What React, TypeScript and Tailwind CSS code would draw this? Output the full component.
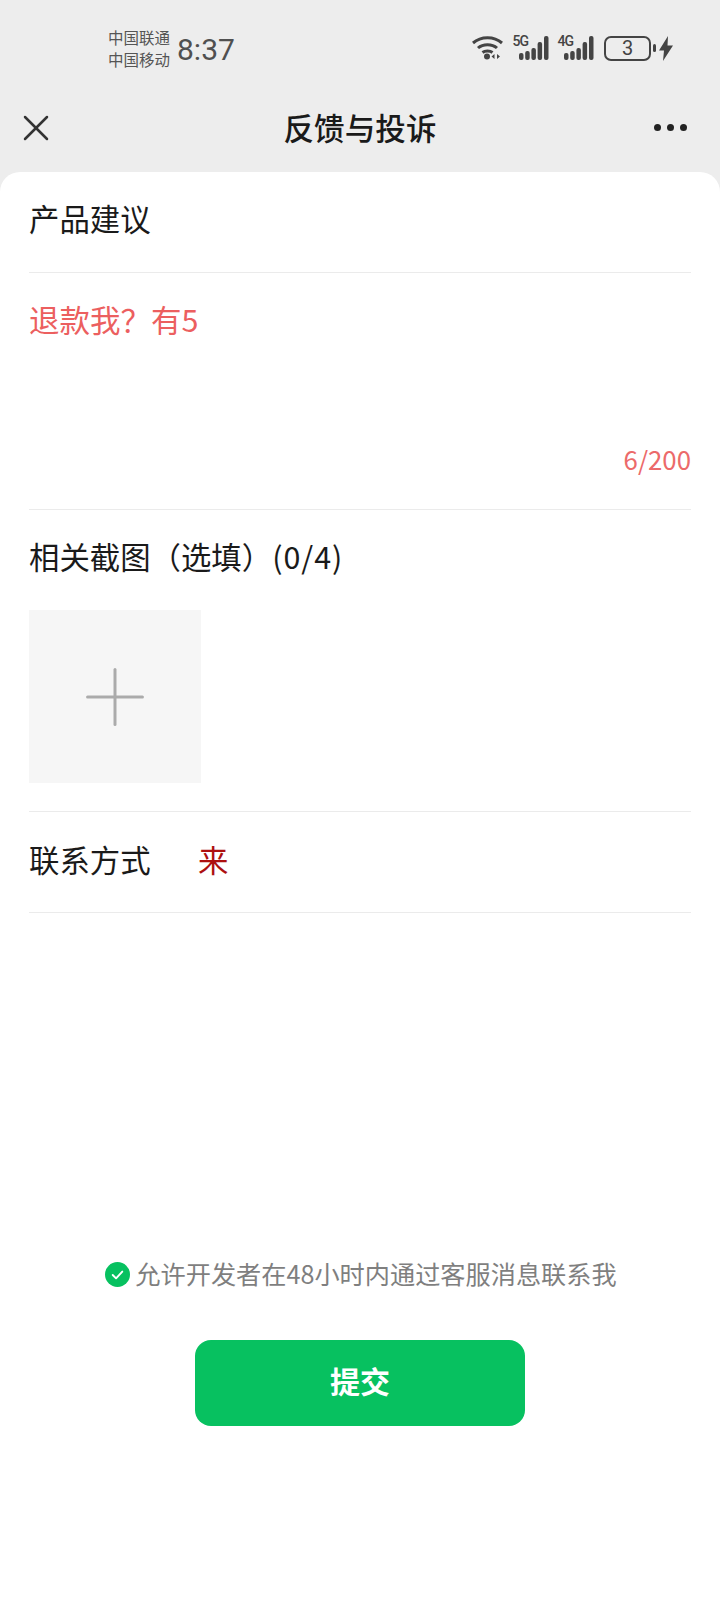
import React from 'react'
import { Plus, X } from 'lucide-react'

const font = "font-['Noto_Sans_CJK_SC','Noto_Sans',sans-serif]"

// Status bar glyphs, drawn because the packages have no dual-SIM signal icons
const SignalIcon: React.FC<{ label: string }> = ({ label }) => (
  <div className="relative w-[35px] h-[24px]">
    <span className="absolute left-[-1.500px] top-[-2px] text-[14px] leading-[14px] font-medium tracking-[-1px] text-[#444] font-['Roboto',sans-serif]">
      {label}
    </span>
    <svg width="35" height="24" viewBox="0 0 35 24" className="absolute left-0 top-0" fill="#444">
      <rect x="5" y="17" width="4.5" height="7" rx="2" />
      <rect x="11.2" y="15" width="4.5" height="9" rx="2" />
      <rect x="17.4" y="12" width="4.5" height="12" rx="2" />
      <rect x="23.6" y="6" width="4.5" height="18" rx="2" />
      <rect x="30" y="0" width="4.5" height="24" rx="2" />
    </svg>
  </div>
)

const WifiIcon: React.FC = () => (
  <svg width="31" height="24" viewBox="0 0 31 24" fill="none" stroke="#444" strokeWidth="3">
    <path d="M1 7C9 0 22 0 30 7" />
    <path d="M6 12C11 7.5 20 7.5 25 12" />
    <path d="M10.5 16.5C13 14.5 18 14.5 20.5 16.5" />
    <circle cx="15" cy="20.5" r="3" fill="#444" stroke="none" />
    <path d="M22.5 18l-3 2.5 3 2.5zM25 18l3 2.5-3 2.5z" fill="#444" stroke="none" />
  </svg>
)

const StatusBar: React.FC = () => (
  <div className="h-[88px] flex items-start justify-between pl-[108px] pr-[47px] pt-[27px]">
    <div className="flex items-center gap-[5px]">
      <div className="flex flex-col text-[15.5px] leading-[22px] text-[#555] w-[64px] -mt-[3px]">
        <span>中国联通</span>
        <span>中国移动</span>
      </div>
      <span className="text-[30px] leading-[44px] text-[#505050] font-['Roboto',sans-serif] mt-[1px]">8:37</span>
    </div>
    <div className="flex items-center h-[44px] mt-[-1px]">
      <WifiIcon />
      <div className="ml-[11px]">
        <SignalIcon label="5G" />
      </div>
      <div className="ml-[10px]">
        <SignalIcon label="4G" />
      </div>
      <div className="w-[47px] h-[25px] ml-[10px] rounded-[7px] border-2 border-[#444] flex items-center justify-center text-[20px] leading-none text-[#444] font-['Roboto',sans-serif]">
        3
      </div>
      <div className="w-[3px] h-[8px] ml-[2px] bg-[#444] rounded-full" />
      <svg width="14" height="25" viewBox="0 0 14 25" fill="#444" className="ml-[3px]">
        <path d="M9 0 0 14.500h5l-1 10.500 10-15.500H8.500z" />
      </svg>
    </div>
  </div>
)

const NavBar: React.FC = () => (
  <div className="h-[84px] px-[14px] pb-[5px] flex items-center justify-between">
    <div className="flex-1">
      <X size={44} strokeWidth={2.500} absoluteStrokeWidth className="text-[#333]" />
    </div>
    <h1 className="text-[30.600px] font-medium leading-none text-[#1a1a1a]">反馈与投诉</h1>
    <div className="flex-1 flex justify-end">
      <div className="flex items-center gap-[6px] mr-[19px]">
        <span className="w-[7px] h-[7px] rounded-full bg-[#222]" />
        <span className="w-[7px] h-[7px] rounded-full bg-[#222]" />
        <span className="w-[7px] h-[7px] rounded-full bg-[#222]" />
      </div>
    </div>
  </div>
)

const App: React.FC = () => (
  <div className={`w-[720px] h-[1600px] bg-[#ededed] overflow-hidden ${font}`}>
    <StatusBar />
    <NavBar />

    <main className="h-[1428px] bg-white rounded-t-[20px] px-[29px]">
      <div className="h-[101px] border-b border-[#ebebeb] flex items-center pb-[6px] text-[30.400px] text-[#1a1a1a]">
        产品建议
      </div>

      <div className="h-[237px] border-b border-[#ebebeb] flex flex-col justify-between pt-[25px] pb-[32px]">
        <p className="text-[30.500px] leading-[42px] text-[#ec5f5f]">
          退款我？有<span className="tracking-[1px]">5</span>
        </p>
        <p className="text-right text-[25.800px] leading-[36px] text-[#ec6a6a]">6/200</p>
      </div>

      <div className="h-[302px] border-b border-[#ebebeb] pt-[25px]">
        <p className="text-[30.400px] leading-[42px] text-[#1a1a1a]">
          相关截图（选填）<span className="tracking-[1px]">(0/4)</span>
        </p>
        <div className="mt-[33px] w-[172px] h-[173px] bg-[#f6f6f6] flex items-center justify-center">
          <Plus size={94} strokeWidth={3} absoluteStrokeWidth className="text-[#ababab]" />
        </div>
      </div>

      <div className="h-[101px] border-b border-[#ebebeb] flex items-center pb-[4px] text-[30.400px]">
        <span className="w-[169px] text-[#1a1a1a]">联系方式</span>
        <span className="text-[#ad1010]">来</span>
      </div>

      <div className="mt-[342px] ml-[2px] flex items-center justify-center gap-[5px]">
        <svg width="25" height="25" viewBox="0 0 26 26" className="mt-[3px]">
          <circle cx="13" cy="13" r="13" fill="#07c160" />
          <path d="M8 13.500l3.500 3.500 6.500-7" fill="none" stroke="#fff" strokeWidth="2" strokeLinecap="round" strokeLinejoin="round" />
        </svg>
        <span className="text-[25.200px] leading-[36px] text-[#7f7f7f]">允许开发者在48小时内通过客服消息联系我</span>
      </div>

      <button className="block mx-auto mt-[49px] w-[330px] h-[86px] pb-[6px] rounded-[16px] bg-[#07c160] text-white text-[30px] font-bold">
        提交
      </button>
    </main>
  </div>
)

export default App
